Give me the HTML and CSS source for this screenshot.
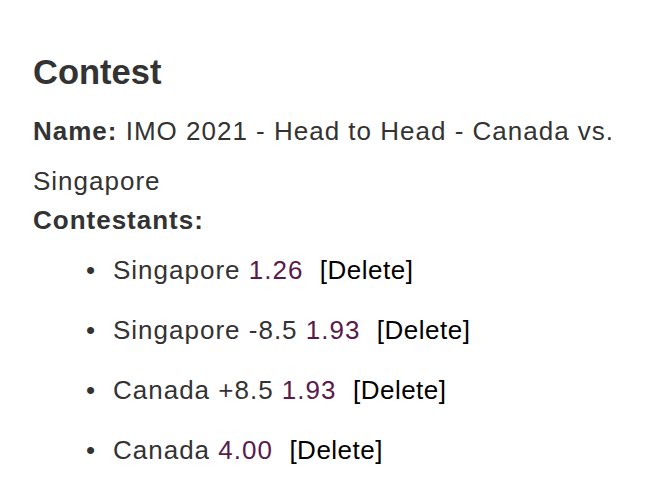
FILE: index.html
```html
<!DOCTYPE html>
<html>
<head>
<meta charset="utf-8">
<link rel="stylesheet" href="styles.css">
</head>
<body>
<div class="page">
  <h3 class="title">Contest</h3>
  <p class="name"><strong>Name:</strong> IMO 2021 - Head to Head - Canada vs. Singapore</p>
  <div class="label"><strong>Contestants:</strong></div>
  <ul class="list">
    <li>Singapore <span class="odds">1.26</span>&nbsp; <span class="del">[Delete]</span></li>
    <li>Singapore -8.5 <span class="odds">1.93</span>&nbsp; <span class="del">[Delete]</span></li>
    <li>Canada +8.5 <span class="odds">1.93</span>&nbsp; <span class="del">[Delete]</span></li>
    <li>Canada <span class="odds">4.00</span>&nbsp; <span class="del">[Delete]</span></li>
  </ul>
</div>
</body>
</html>
```

FILE: styles.css
```css
html, body {
  margin: 0;
  padding: 0;
  background: #fff;
}
body {
  font-family: "Liberation Sans", Arial, sans-serif;
  font-size: 26px;
  letter-spacing: 1px;
  color: #333;
}
.page {
  padding: 48px 33px 0 33px;
}
.title {
  margin: 0;
  font-size: 34.5px;
  font-weight: 700;
  letter-spacing: 0;
  line-height: 48px;
}
.name {
  margin: 10px 0 0 0;
  line-height: 50px;
}
.label {
  line-height: 28px;
  margin-top: 0;
}
.list {
  list-style: none;
  margin: 6px 0 0 0;
  padding-left: 53px;
  line-height: 60px;
}
.list li::before {
  content: "\2022";
  display: inline-block;
  width: 27px;
  letter-spacing: 0;
}
.odds {
  color: #5a1a4c;
}
.del {
  color: #000;
  letter-spacing: 0.5px;
}
```
